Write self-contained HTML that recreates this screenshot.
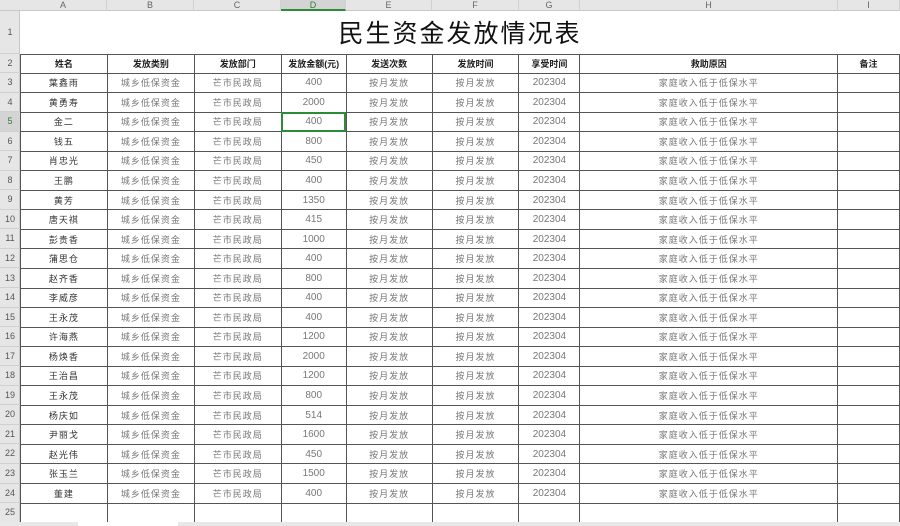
<!DOCTYPE html>
<html><head><meta charset="utf-8"><style>
*{margin:0;padding:0;box-sizing:border-box}
body{width:900px;height:526px;overflow:hidden;background:#fff;font-family:"Liberation Sans","Noto Sans CJK SC",sans-serif;position:relative}
.colh{position:absolute;top:0;left:0;height:11px;width:900px;background:#e6e6e6;border-bottom:1px solid #c8c8c8}
.colh div{position:absolute;top:0;height:11px;font-size:9px;line-height:11px;text-align:center;color:#666;border-right:1px solid #d0d0d0}
.rowh{position:absolute;left:0;top:11px;width:20px;height:515px;background:#e6e6e6;border-right:1px solid #c8c8c8}
.rowh div{position:absolute;left:0;width:20px;font-size:9px;color:#555;text-align:center;border-bottom:1px solid #d0d0d0}
table{position:absolute;left:20px;top:11px;border-collapse:collapse;table-layout:fixed}
td{border:1px solid #555;font-size:9px;text-align:center;color:#777;white-space:nowrap;overflow:hidden;padding:0;letter-spacing:1px}
tr.h td{font-weight:bold;color:#222;letter-spacing:0}
td.n{color:#777;letter-spacing:0;font-size:10px}
</style></head><body>
<div class="colh">
<div style="left:20px;width:87px">A</div><div style="left:107px;width:87px">B</div><div style="left:194px;width:87px">C</div><div style="left:281px;width:65px;background:#d4d4d4;border-bottom:2px solid #2e8b3a;color:#2e7d32">D</div><div style="left:346px;width:86px">E</div><div style="left:432px;width:87px">F</div><div style="left:519px;width:61px">G</div><div style="left:580px;width:258px">H</div><div style="left:838px;width:62px">I</div>
</div>
<div class="rowh" id="rh"></div>
<table id="t">
<colgroup><col style="width:87px"><col style="width:87px"><col style="width:87px"><col style="width:65px"><col style="width:86px"><col style="width:87px"><col style="width:61px"><col style="width:258px"><col style="width:62px"></colgroup>
<tr style="height:43px"><td colspan="9" style="border:none;font-size:25px;color:#111;letter-spacing:2px;border-bottom:1px solid #555">民生资金发放情况表</td></tr>
<tr class="h" style="height:19px"><td>姓名</td><td>发放类别</td><td>发放部门</td><td>发放金额(元)</td><td>发送次数</td><td>发放时间</td><td>享受时间</td><td>救助原因</td><td>备注</td></tr>
</table>
<div style="position:absolute;left:0;top:522px;width:900px;height:4px;background:#e8e8e8"></div>
<div style="position:absolute;left:78px;top:522px;width:100px;height:4px;background:#fff"></div>
<script>
var names=["葉鑫雨","黄勇寿","金二","钱五","肖忠光","王鹏","黄芳","唐天祺","彭贵香","蒲思仓","赵齐香","李威彦","王永茂","许海燕","杨焕香","王治昌","王永茂","杨庆如","尹丽戈","赵光伟","张玉兰","董建"];
var amt=["400","2000","400","800","450","400","1350","415","1000","400","800","400","400","1200","2000","1200","800","514","1600","450","1500","400"];
var t=document.getElementById('t'),h='';
for(var i=0;i<22;i++){h+='<tr style="height:19.55px"><td style="color:#333">'+names[i]+'</td><td>城乡低保资金</td><td>芒市民政局</td><td class="n"'+(i==2?' style="outline:2px solid #2e8b3a;outline-offset:-2px"':'')+'>'+amt[i]+'</td><td>按月发放</td><td>按月发放</td><td class="n">202304</td><td>家庭收入低于低保水平</td><td></td></tr>';}
h+='<tr style="height:19px"><td></td><td></td><td></td><td></td><td></td><td></td><td></td><td></td><td></td></tr>';
t.insertAdjacentHTML('beforeend',h);
var rh=document.getElementById('rh'),s='';
for(var r=1;r<=25;r++){var y,hh;if(r==1){y=0;hh=43}else if(r==2){y=43;hh=19}else{y=62+(r-3)*19.55;hh=19.55}
s+='<div style="top:'+y+'px;height:'+hh+'px;line-height:'+hh+'px'+(r==5?';background:#d4d4d4;color:#2e7d32':'')+'">'+r+'</div>';}
rh.innerHTML=s;
</script>
</body></html>
